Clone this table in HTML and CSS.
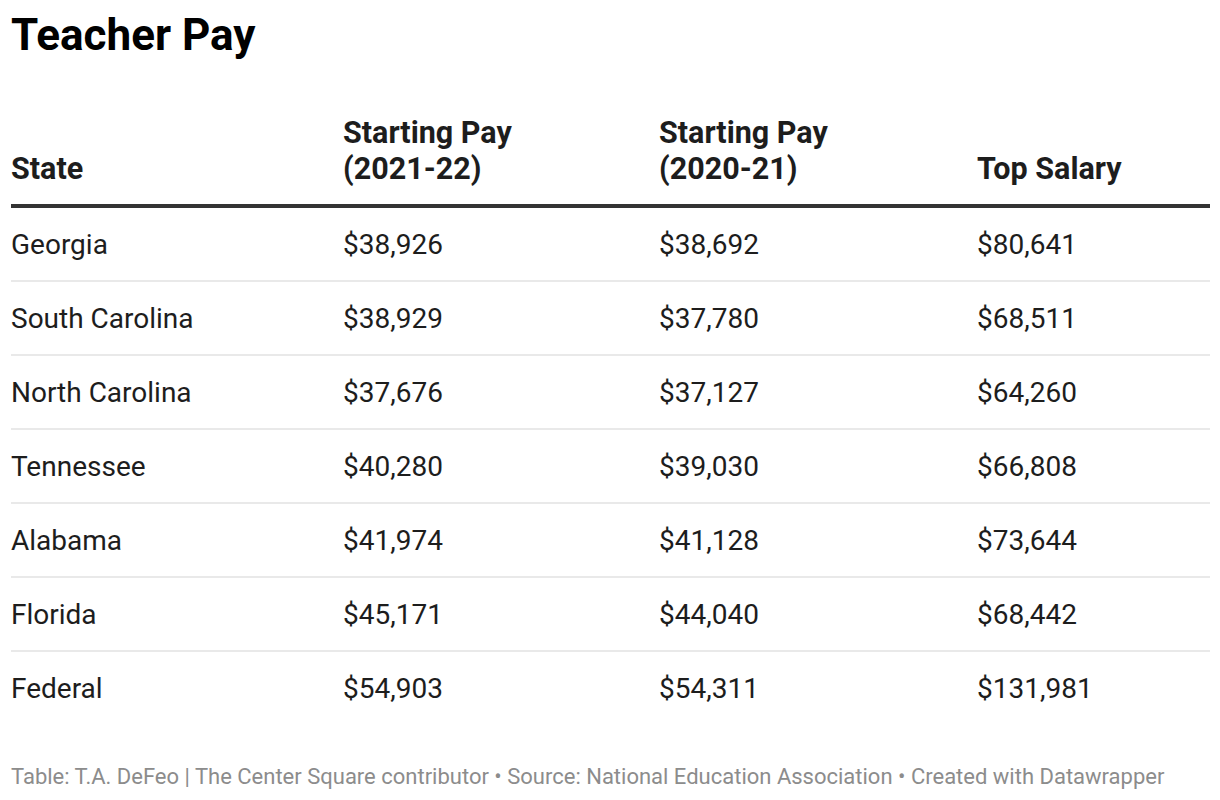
FILE: index.html
```html
<!DOCTYPE html>
<html lang="en">
<head>
<meta charset="utf-8">
<title>Teacher Pay</title>
<link rel="stylesheet" href="styles.css">
</head>
<body>
<div class="chart">
  <h1 class="title">Teacher Pay</h1>
  <div class="table">
    <div class="row head">
      <div class="cell">State</div>
      <div class="cell">Starting Pay<br>(2021-22)</div>
      <div class="cell">Starting Pay<br>(2020-21)</div>
      <div class="cell">Top Salary</div>
    </div>
    <div class="row"><div class="cell">Georgia</div><div class="cell">$38,926</div><div class="cell">$38,692</div><div class="cell">$80,641</div></div>
    <div class="row"><div class="cell">South Carolina</div><div class="cell">$38,929</div><div class="cell">$37,780</div><div class="cell">$68,511</div></div>
    <div class="row"><div class="cell">North Carolina</div><div class="cell">$37,676</div><div class="cell">$37,127</div><div class="cell">$64,260</div></div>
    <div class="row"><div class="cell">Tennessee</div><div class="cell">$40,280</div><div class="cell">$39,030</div><div class="cell">$66,808</div></div>
    <div class="row"><div class="cell">Alabama</div><div class="cell">$41,974</div><div class="cell">$41,128</div><div class="cell">$73,644</div></div>
    <div class="row"><div class="cell">Florida</div><div class="cell">$45,171</div><div class="cell">$44,040</div><div class="cell">$68,442</div></div>
    <div class="row last"><div class="cell">Federal</div><div class="cell">$54,903</div><div class="cell">$54,311</div><div class="cell">$131,981</div></div>
  </div>
  <div class="footer">Table: T.A. DeFeo | The Center Square contributor • Source: National Education Association • Created with Datawrapper</div>
</div>
</body>
</html>
```

FILE: styles.css
```css
html, body {
  margin: 0;
  padding: 0;
  background: #ffffff;
}

body {
  font-family: Roboto, "Liberation Sans", Arial, sans-serif;
  color: #1d1d1d;
}

.chart {
  padding: 10px 10px 0 11px;
}

.title {
  margin: 0;
  font-size: 44px;
  line-height: 50px;
  font-weight: 700;
  color: #000000;
}

.table {
  margin-top: 55px;
}

.row {
  display: grid;
  grid-template-columns: 332px 316px 318px 1fr;
  border-bottom: 2px solid #e9e9e9;
}

.row.last {
  border-bottom: none;
}

.cell {
  font-size: 28px;
  line-height: 40px;
  padding: 17px 0 15px 0;
}

.row.head {
  border-bottom: 4px solid #333333;
  align-items: end;
}

.row.head .cell {
  font-size: 30.5px;
  font-weight: 700;
  line-height: 36px;
  padding: 0 0 17px 0;
}

.footer {
  margin-top: 40px;
  font-size: 22px;
  line-height: 26px;
  color: #8c8c8c;
}
```
